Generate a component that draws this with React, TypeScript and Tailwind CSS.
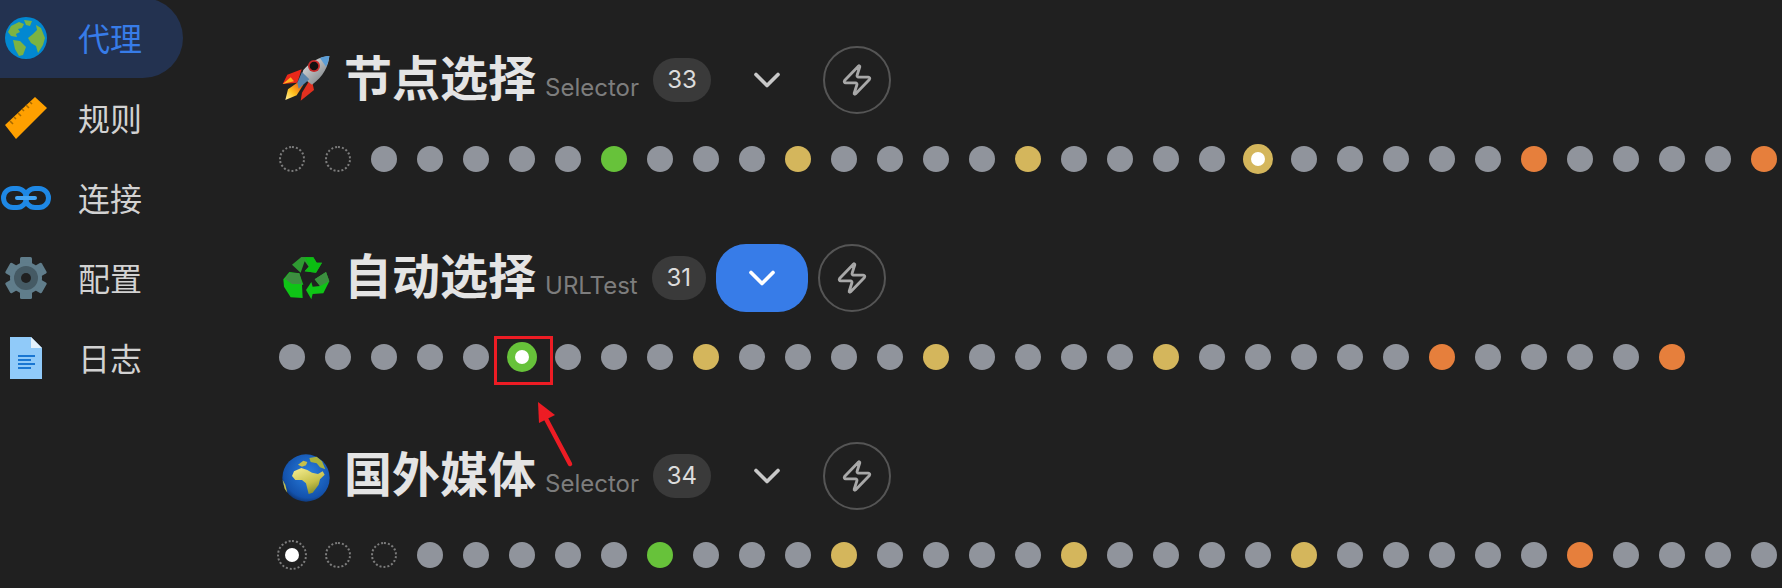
import { ChevronDown, Zap } from "lucide-react";

const GlobeIcon = () => (
  <svg viewBox="0 0 42 42" className="w-[42px] h-[42px]">
    <circle cx="21" cy="21" r="21" fill="#0288d1" />
    <path d="M6 9 L14 5 L19 7 L17 11 L13 12 L15 15 L11 17 L12 20 L6 19 L3 15 Z" fill="#7cb342" />
    <path d="M19 3 L27 4 L25 9 L21 8 Z" fill="#7cb342" />
    <path d="M31 8 L36 11 L40 21 L38 28 L33 36 L31 29 L26 26 L23 21 L28 17 L32 13 Z" fill="#7cb342" />
    <path d="M8 23 L15 24 L21 30 L18 38 L14 39 L10 32 Z" fill="#7cb342" />
  </svg>
);

const RulerIcon = () => (
  <svg viewBox="0 0 42 42" className="w-[42px] h-[42px]">
    <path d="M0 28 L30 0 L42 11 L11 42 Z" fill="#ffa000" />
    <path
      d="M5 24 L8 27 M9 20 L11 22 M13 16 L16 19 M17 12 L19 14 M21 8 L24 11 M25 5 L27 7"
      stroke="#a86a00"
      strokeWidth="1.6"
    />
  </svg>
);

const LinkIcon = () => (
  <svg viewBox="0 0 50 24" className="w-[50px] h-[24px]">
    <rect x="2.5" y="2.5" width="23" height="19" rx="9.5" fill="none" stroke="#1e88e5" strokeWidth="5" />
    <rect x="24.5" y="2.5" width="23" height="19" rx="9.5" fill="none" stroke="#1e88e5" strokeWidth="5" />
    <rect x="14" y="10" width="22" height="4" rx="2" fill="#42a5f5" />
  </svg>
);

const GearIcon = () => (
  <svg viewBox="0 0 42 42" className="w-[42px] h-[42px]">
    {[0, 60, 120, 180, 240, 300].map((a) => (
      <rect key={a} x="15" y="0" width="12" height="12" rx="1.5" fill="#607d8b" transform={`rotate(${a} 21 21)`} />
    ))}
    <circle cx="21" cy="21" r="16" fill="#607d8b" />
    <circle cx="21" cy="21" r="12" fill="#455a64" />
    <circle cx="21" cy="21" r="5" fill="#202020" />
  </svg>
);

const DocIcon = () => (
  <svg viewBox="0 0 42 42" className="w-[42px] h-[42px]">
    <path d="M5 0 H26 L37 11 V42 H5 Z" fill="#90caf9" />
    <path d="M26 0 L37 11 H26 Z" fill="#e3f2fd" />
    <path d="M13 19 H30 M13 23 H26 M13 27 H30 M13 31 H26" stroke="#1976d2" strokeWidth="2" />
  </svg>
);

const RocketEmoji = () => (
  <svg viewBox="0 0 210 210" className="w-[70px] h-[70px] max-w-none -ml-[10px] -mt-[10px]">
    <defs>
      <linearGradient id="rbody" x1="0" y1="0" x2="1" y2="1">
        <stop offset="0" stopColor="#f2f2f2" />
        <stop offset="1" stopColor="#6f7478" />
      </linearGradient>
      <linearGradient id="rfire" x1="1" y1="0" x2="0" y2="1">
        <stop offset="0" stopColor="#e8420f" />
        <stop offset="0.6" stopColor="#ffc21f" />
        <stop offset="1" stopColor="#fff1a0" />
      </linearGradient>
    </defs>
    <path d="M38 132 L52 104 L95 88 L82 128 Z" fill="#e8281a" />
    <path d="M38 132 L62 112 L72 124 Z" fill="#ffb01f" />
    <path d="M92 182 L96 158 L124 112 L132 150 Z" fill="#e3301f" />
    <path d="M46 180 L54 148 L88 124 L100 134 L80 166 Z" fill="url(#rfire)" />
    <path d="M100 90 C120 66 150 50 178 48 C176 78 160 110 126 134 L104 118 L86 132 Z" fill="url(#rbody)" />
    <path d="M150 54 C160 50 170 48 178 48 C177 58 174 70 168 80 Z" fill="#5c9ed6" />
    <path d="M96 96 L118 118 L86 146 L82 128 Z" fill="#5a84ab" />
    <circle cx="132" cy="78" r="18" fill="#c92a2a" />
    <circle cx="132" cy="78" r="13" fill="#111" />
  </svg>
);

const RecycleEmoji = () => (
  <svg viewBox="0 0 210 210" className="w-[70px] h-[70px] max-w-none -ml-[10px] -mt-[6px]">
    <path d="M66 68 L94 45 L130 46 L140 62 L156 62 L138 92 L104 88 L116 74 L104 58 L92 92 Z" fill="#2f9a32" />
    <path d="M104 46 L130 46 L140 62 L156 62 L138 92 L104 88 L118 72 Z" fill="#0bbd12" />
    <path d="M40 112 L58 90 L88 94 L100 128 L96 128 L98 168 L62 166 L42 134 Z" fill="#0fc416" />
    <path d="M44 110 L58 92 L88 94 L96 126 L66 126 Z" fill="#3d8e40" />
    <path d="M134 112 L168 90 L178 118 L160 154 L128 156 L124 172 L108 144 L124 120 L128 134 L150 132 Z" fill="#0fc416" />
    <path d="M134 112 L168 90 L178 118 L150 132 Z" fill="#3d8e40" />
  </svg>
);

const EarthEmoji = () => (
  <svg viewBox="0 0 210 210" className="w-[70px] h-[70px] max-w-none -ml-[10px] -mt-[2px]">
    <defs>
      <radialGradient id="ocean" cx="0.55" cy="0.4" r="0.65">
        <stop offset="0" stopColor="#2a7fe0" />
        <stop offset="0.8" stopColor="#1352ac" />
        <stop offset="1" stopColor="#0d2f66" />
      </radialGradient>
      <linearGradient id="land" x1="0.2" y1="0" x2="0.7" y2="1">
        <stop offset="0" stopColor="#f1ea8b" />
        <stop offset="0.6" stopColor="#c6c04a" />
        <stop offset="1" stopColor="#7e8a2a" />
      </linearGradient>
    </defs>
    <circle cx="108" cy="102" r="71" fill="url(#ocean)" />
    <path d="M66 96 L72 82 L94 72 L112 78 L126 86 L144 90 L158 82 L164 92 L150 106 L146 122 L128 146 L116 150 L108 118 L96 108 L76 108 Z" fill="url(#land)" />
    <path d="M84 62 L100 50 L112 54 L108 64 L96 68 Z" fill="#c6c04a" />
    <path d="M118 42 L140 38 L156 52 L166 76 L150 70 L140 58 L122 54 Z" fill="#a9b23c" />
    <path d="M38 108 L46 122 L52 146 L44 134 Z" fill="#c6c04a" />
  </svg>
);

const nav = [
  { label: "代理", icon: <GlobeIcon />, active: true },
  { label: "规则", icon: <RulerIcon /> },
  { label: "连接", icon: <LinkIcon /> },
  { label: "配置", icon: <GearIcon /> },
  { label: "日志", icon: <DocIcon /> },
];

type DotKind = "gray" | "green" | "yellow" | "orange" | "empty";

const dotColor: Record<DotKind, string> = {
  gray: "bg-[#90949c]",
  green: "bg-[#67c23a]",
  yellow: "bg-[#d4b65c]",
  orange: "bg-[#e67f3c]",
  empty: "border-2 border-dotted border-[#7c7c7c]",
};

const Dot = ({ kind, selected }: { kind: DotKind; selected: boolean }) => {
  if (!selected) return <div className={`w-[26px] h-[26px] shrink-0 rounded-full ${dotColor[kind]}`} />;
  return (
    <div
      className={`w-[30px] h-[30px] shrink-0 -mx-[2px] rounded-full flex items-center justify-center ${dotColor[kind]}`}
    >
      <div className="w-[14px] h-[14px] rounded-full bg-white" />
    </div>
  );
};

const makeDots = (total: number, marks: Record<number, DotKind>) =>
  Array.from({ length: total }, (_, i): DotKind => marks[i] ?? "gray");

const groups = [
  {
    emoji: <RocketEmoji />,
    title: "节点选择",
    type: "Selector",
    count: 33,
    badgeW: "w-[58px]",
    open: false,
    selected: 21,
    dots: makeDots(33, { 0: "empty", 1: "empty", 7: "green", 11: "yellow", 16: "yellow", 21: "yellow", 27: "orange", 32: "orange" }),
  },
  {
    emoji: <RecycleEmoji />,
    title: "自动选择",
    type: "URLTest",
    count: 31,
    badgeW: "w-[54px]",
    open: true,
    selected: 5,
    dots: makeDots(31, { 5: "green", 9: "yellow", 14: "yellow", 19: "yellow", 25: "orange", 30: "orange" }),
  },
  {
    emoji: <EarthEmoji />,
    title: "国外媒体",
    type: "Selector",
    count: 34,
    badgeW: "w-[58px]",
    open: false,
    selected: 0,
    dots: makeDots(33, { 0: "empty", 1: "empty", 2: "empty", 8: "green", 12: "yellow", 17: "yellow", 22: "yellow", 28: "orange" }),
  },
];

export default function App() {
  return (
    <div className="relative flex h-[588px] overflow-hidden bg-[#202020] font-['Inter','Noto_Sans_CJK_SC',sans-serif]">
      <aside className="w-[279px] shrink-0">
        <nav className="-mt-[2px]">
          {nav.map((item) => (
            <div
              key={item.label}
              className={`flex items-center h-20 w-[183px] rounded-r-[40px] ${item.active ? "bg-[#233250] text-[#377ce8]" : "text-[#d2d2d2]"}`}
            >
              <div className="w-[50px] ml-[1px] flex justify-center">{item.icon}</div>
              <span className="ml-[27px] pt-[3px] text-[32px] leading-none">{item.label}</span>
            </div>
          ))}
        </nav>
      </aside>

      <main className="flex-1 min-w-0 pt-[46px]">
        {groups.map((g) => (
          <section key={g.title} className="h-[198px]">
            <div className="flex items-center h-[68px]">
              <div className="w-[50px] ml-[1px] h-[60px]">{g.emoji}</div>
              <div className="flex items-baseline ml-[14px] -mt-[3px]">
                <h2 className="text-[48px] leading-none font-semibold text-[#e4e4e4]">{g.title}</h2>
                <span className="ml-[9px] text-[24px] leading-none text-[#7d7d7d]">{g.type}</span>
              </div>
              <div
                className={`ml-[14px] ${g.badgeW} h-[44px] rounded-[22px] bg-[#3a3a3a] flex items-center justify-center text-[24px] text-[#dcdcdc]`}
              >
                {g.count}
              </div>
              <button
                className={`ml-[10px] w-[92px] h-[68px] rounded-[30px] flex items-center justify-center ${g.open ? "bg-[#377ce8] text-white" : "text-[#c8c8c8]"}`}
              >
                <ChevronDown size={44} strokeWidth={2} />
              </button>
              <button className="ml-[10px] w-[68px] h-[68px] rounded-full border-2 border-[#555555] flex items-center justify-center text-[#a8a8a8]">
                <Zap size={34} strokeWidth={2} />
              </button>
            </div>
            <div className="mt-[32px] flex items-center h-[26px] gap-5">
              {g.dots.map((kind, i) => (
                <Dot key={i} kind={kind} selected={i === g.selected} />
              ))}
            </div>
          </section>
        ))}
      </main>

      {/* screenshot annotation */}
      <div className="absolute left-[494px] top-[336px] w-[59px] h-[49px] border-[3px] border-[#ed1c24]" />
      <svg className="absolute left-[530px] top-[395px] w-[50px] h-[80px]" viewBox="0 0 50 80">
        <path d="M8 7 L9 28 L25 20 Z" fill="#ed1c24" />
        <path d="M14 20 L40 69" stroke="#ed1c24" strokeWidth="4.5" strokeLinecap="round" />
      </svg>
    </div>
  );
}
